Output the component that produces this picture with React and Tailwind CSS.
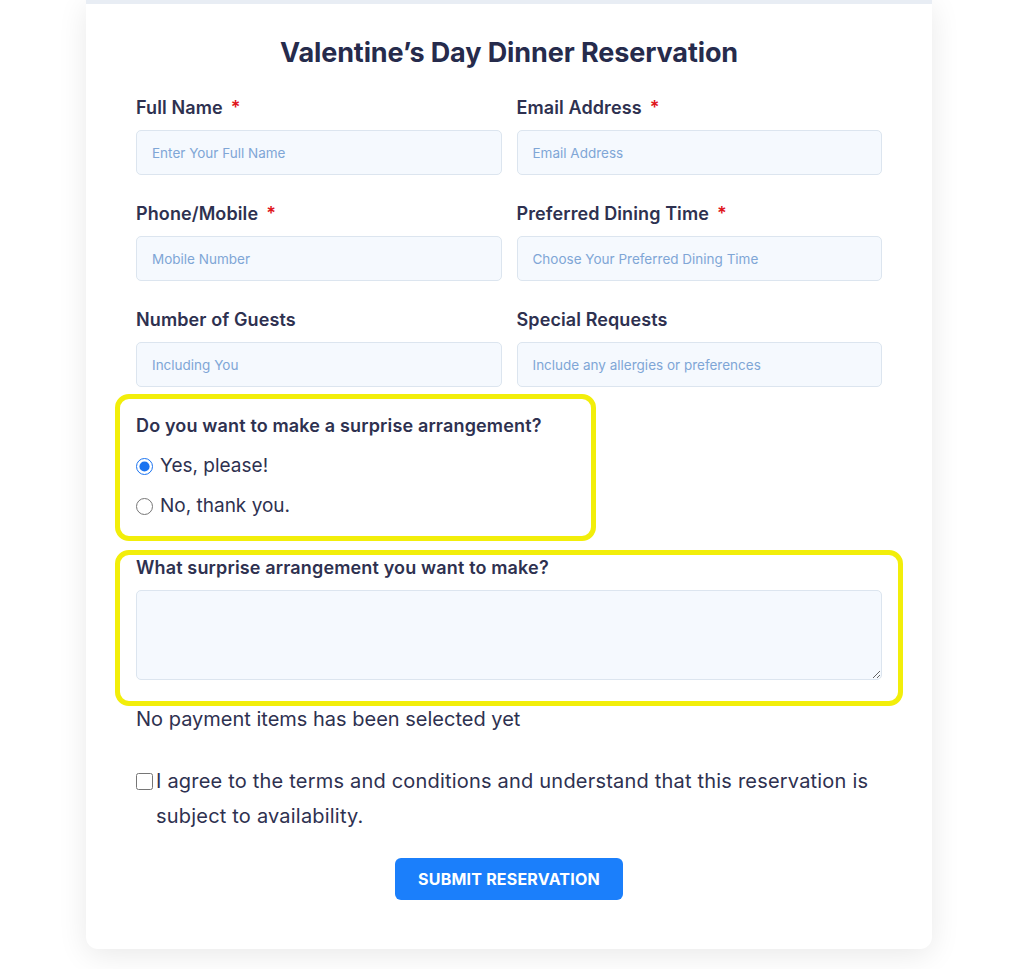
import React from "react";

const font = { fontFamily: "Inter, 'Noto Sans', sans-serif" };

function Label({ children, required }) {
  return (
    <div className="text-[18px] font-semibold text-[#2e3150] leading-[22px] mb-[11px] tracking-[0.1px]">
      {children}
      {required && <span className="text-[#e0151b] ml-[8px]">*</span>}
    </div>
  );
}

function Field({ label, required, placeholder }) {
  return (
    <div className="flex flex-col">
      <Label required={required}>{label}</Label>
      <input
        placeholder={placeholder}
        className="h-[45px] w-full rounded-[5px] border border-[#dce5ef] bg-[#f5f9fe] px-[15px] text-[13.5px] text-[#2e3150] placeholder:text-[#7fa6d6] outline-none"
      />
    </div>
  );
}

export default function App() {
  return (
    <div className="min-h-[969px] bg-white" style={font}>
      <div className="ml-[86px] w-[846px] rounded-b-[12px] border-t-[4px] border-[#e8edf4] bg-white shadow-[0_6px_30px_rgba(0,0,0,0.09)] px-[50px] pt-[32px] pb-[49px]">
        <h1 className="text-center text-[27px] font-bold text-[#262b4c] leading-[34px] tracking-[-0.1px]">
          Valentine’s Day Dinner Reservation
        </h1>
        <div className="mt-[27px] grid grid-cols-2 gap-x-[15px] gap-y-[28px]">
          <Field label="Full Name" required placeholder="Enter Your Full Name" />
          <Field label="Email Address" required placeholder="Email Address" />
          <Field label="Phone/Mobile" required placeholder="Mobile Number" />
          <Field label="Preferred Dining Time" required placeholder="Choose Your Preferred Dining Time" />
          <Field label="Number of Guests" placeholder="Including You" />
          <Field label="Special Requests" placeholder="Include any allergies or preferences" />
        </div>

        <div className="mt-[7px] -ml-[21px] w-[481px] rounded-[14px] border-[5px] border-[#f2ee0a] pl-[16px] pt-[16px] pb-[10px]">
          <div className="text-[18px] font-semibold text-[#2e3150] leading-[22px] tracking-[0.15px]">
            Do you want to make a surprise arrangement?
          </div>
          <label className="mt-[9px] flex items-center h-[40px]">
            <input type="radio" name="surprise" defaultChecked className="m-0 h-[17px] w-[17px] accent-[#1a73f0]" />
            <span className="ml-[7px] text-[19px] text-[#2e3150]">Yes, please!</span>
          </label>
          <label className="flex items-center h-[40px]">
            <input type="radio" name="surprise" className="m-0 h-[17px] w-[17px] accent-[#1a73f0]" />
            <span className="ml-[7px] text-[19px] text-[#2e3150]">No, thank you.</span>
          </label>
        </div>

        <div className="mt-[9px] -mx-[21px] rounded-[14px] border-[5px] border-[#f2ee0a] px-[16px] pt-[2px] pb-[21px]">
          <div className="text-[18px] font-semibold text-[#2e3150] leading-[22px] tracking-[0.15px]">
            What surprise arrangement you want to make?
          </div>
          <textarea className="mt-[11px] block h-[90px] w-full rounded-[5px] border border-[#dce5ef] bg-[#f5f9fe] outline-none" />
        </div>

        <div className="mt-[0px] text-[20px] text-[#2e3150] leading-[26px]">
          No payment items has been selected yet
        </div>

        <div className="mt-[32px] flex items-start text-[20px] text-[#2e3150] leading-[35px] tracking-[0.2px]">
          <input type="checkbox" className="mt-[9px] m-0 h-[17px] w-[17px] shrink-0 accent-[#1a73f0]" />
          <span className="ml-[3px] pr-[10px]">
            I agree to the terms and conditions and understand that this reservation is subject to availability.
          </span>
        </div>

        <div className="mt-[24px] flex justify-center">
          <button className="h-[42px] w-[228px] rounded-[6px] bg-[#1b7ffb] text-[16px] font-bold uppercase text-white tracking-[0.2px]">
            Submit Reservation
          </button>
        </div>
      </div>
    </div>
  );
}
